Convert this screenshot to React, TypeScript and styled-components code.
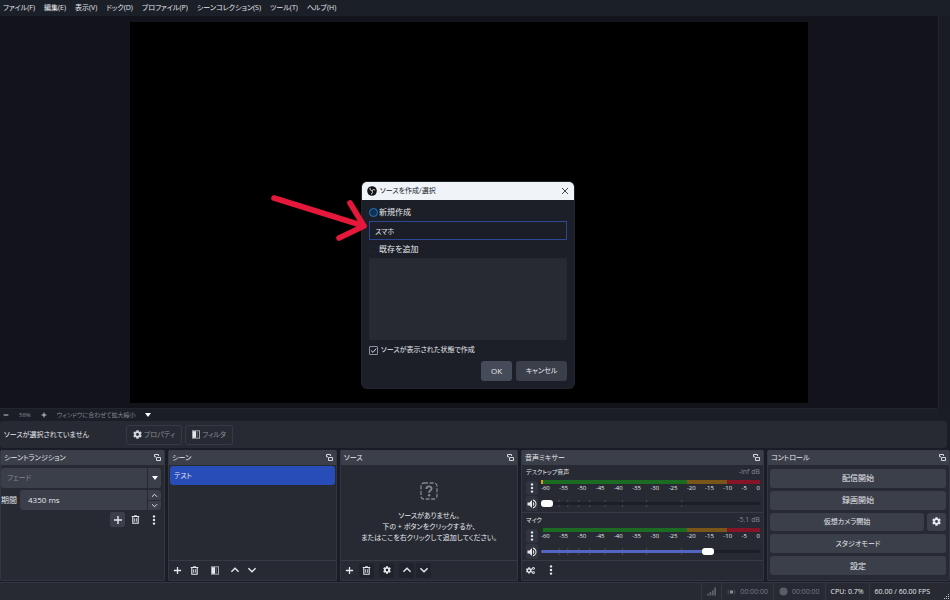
import React from "react";
import styled, { createGlobalStyle, css } from "styled-components";
import { FaCog, FaCogs } from "react-icons/fa";
import { MdVolumeUp } from "react-icons/md";

const GlobalStyle = createGlobalStyle`
  *, *::before, *::after { box-sizing: border-box; }
  html, body { margin: 0; background: #1a1d26; }
  body, button, input, select {
    font-family: "Open Sans", "Noto Sans CJK JP", sans-serif;
    font-size: 7px;
    line-height: 12px;
    font-feature-settings: "palt";
    color: #e6e8ec;
  }
  button, input, select { margin: 0; padding: 0; border: 0; background: none; outline: none; }
  svg { display: block; flex: none; }
`;

const Window = styled.div`
  position: relative;
  display: flex;
  flex-direction: column;
  height: 100vh;
  overflow: hidden;
`;

const MenuBar = styled.nav`
  display: flex;
  gap: 9px;
  height: 16px;
  padding: 0 3px;
  background: #1b1f28;
`;

const MenuItem = styled.button`
  white-space: nowrap;
`;

const Preview = styled.main`
  flex: 1;
  min-height: 0;
  display: flex;
  background: #13141b;
`;

const Stage = styled.div`
  flex: 1;
  display: flex;
  align-items: center;
  justify-content: center;
`;

const Canvas = styled.div`
  height: calc(100% - 11px);
  aspect-ratio: 16 / 9;
  background: #000;
`;

const ScrollTrack = styled.div`
  width: 12px;
  background: #191c24;
  border-left: 1px solid #22252e;
`;

const ZoomBar = styled.div`
  display: flex;
  align-items: center;
  gap: 10px;
  height: 12px;
  margin-right: 12px;
  padding: 0 3px;
  background: #1b1e26;
  border-top: 1px solid #22252e;
  color: #a6a8ae;
`;

const ZoomText = styled.span`
  font-size: 6px;
  color: #858890;
  white-space: nowrap;
`;

const BareButton = styled.button`
  display: flex;
  align-items: center;
  justify-content: center;
`;

const SourceBar = styled.section`
  display: flex;
  align-items: center;
  height: 27px;
  margin: 1px 3px 2px 0;
  padding: 0 4px;
  background: #272a33;
  border-radius: 3px;
`;

const SourceStatus = styled.span`
  width: 122px;
  white-space: nowrap;
`;

const OutlineButton = styled.button`
  display: flex;
  align-items: center;
  justify-content: center;
  gap: 2px;
  height: 20px;
  margin-right: 3px;
  padding: 0 6px;
  border: 1px solid #363a44;
  border-radius: 3px;
  color: #8b8e96;
  svg { color: #d5d7db; }
`;

const Docks = styled.div`
  display: grid;
  grid-template-columns:
    minmax(0, 165fr) minmax(0, 169fr) minmax(0, 178fr)
    minmax(0, 243fr) minmax(0, 183fr);
  gap: 3px;
  height: 131px;
`;

const Dock = styled.section`
  display: flex;
  flex-direction: column;
  background: #272a33;
  border: 1px solid #343741;
  border-top: 0;
  border-radius: 2px;
`;

const DockHeader = styled.header`
  display: flex;
  align-items: center;
  justify-content: space-between;
  height: 15px;
  padding: 0 3px;
  background: #3b3f4a;
`;

const DockTitle = styled.h2`
  margin: 0;
  font-size: 7px;
  font-weight: 400;
`;

const DockBody = styled.div<{ $pad?: string; $gap?: number }>`
  flex: 1;
  min-height: 0;
  display: flex;
  flex-direction: column;
  gap: ${(p) => p.$gap ?? 0}px;
  padding: ${(p) => p.$pad ?? "0"};
`;

const Field = styled.div`
  display: flex;
  height: 20px;
  flex: 1;
  background: #3b3f4a;
  border-radius: 3px;
  overflow: hidden;
`;

const FieldRow = styled.div`
  display: flex;
  align-items: center;
  gap: 3px;
`;

const FieldLabel = styled.label`
  font-size: 8px;
`;

const SelectWrap = styled(Field)`
  flex: none;
  width: 100%;
`;

const Select = styled.select`
  flex: 1;
  appearance: none;
  padding-left: 6px;
  color: #858890;
`;

const SelectArrow = styled.span`
  display: flex;
  align-items: center;
  justify-content: center;
  width: 14px;
  border-left: 1px solid #272a33;
  pointer-events: none;
`;

const SpinInput = styled.input`
  flex: 1;
  min-width: 0;
  padding-left: 8px;
  font-size: 8px;
`;

const SpinButtons = styled.div`
  display: grid;
  grid-template-rows: 1fr 1fr;
  width: 14px;
  border-left: 1px solid #272a33;
  button + button { border-top: 1px solid #272a33; }
`;

const ToolButton = styled.button<{ $tone?: "raised" | "sunken" }>`
  display: flex;
  align-items: center;
  justify-content: center;
  width: 15px;
  height: 15px;
  border-radius: 2px;
  ${(p) => p.$tone === "raised" && css`background: #3b3f4a;`}
  ${(p) => p.$tone === "sunken" && css`background: #20232b;`}
`;

const TransitionTools = styled.div`
  display: flex;
  justify-content: flex-end;
  gap: 3px;
`;

const DockTools = styled.footer`
  display: flex;
  align-items: center;
  gap: 5px;
  height: 20px;
  padding: 0 1px 1px;
  border-top: 1px solid #363a44;
`;

const ToolGroup = styled.div`
  display: flex;
  gap: 2px;
`;

const SceneList = styled.ul`
  flex: 1;
  margin: 0;
  padding: 1px;
  list-style: none;
`;

const SceneItem = styled.button`
  display: block;
  width: 100%;
  height: 19px;
  padding: 0 4px;
  text-align: left;
  background: #284cb8;
  border-radius: 3px;
`;

const EmptyState = styled.div`
  flex: 1;
  display: flex;
  flex-direction: column;
  align-items: center;
  justify-content: center;
  gap: 10px;
  text-align: center;
`;

const EmptyText = styled.p`
  margin: 0;
  line-height: 11px;
  white-space: nowrap;
`;

const Channel = styled.div`
  display: flex;
  flex-direction: column;
  height: 47px;
  padding: 1px 3px 0 4px;
  & + & { border-top: 1px solid #363a44; }
`;

const ChannelHead = styled.div`
  display: flex;
  justify-content: space-between;
  height: 14px;
`;

const ChannelName = styled.span`
  font-size: 6px;
`;

const Level = styled.span`
  color: #858890;
`;

const ChannelGrid = styled.div`
  display: grid;
  grid-template-columns: 12px minmax(0, 1fr);
  grid-template-rows: 15px 16px;
  column-gap: 3px;
`;

const ChannelButton = styled.button`
  display: flex;
  align-items: center;
  justify-content: center;
  margin-top: 1px;
  background: #31353f;
  border-radius: 2px;
`;

const Meter = styled.div`
  display: flex;
  height: 4px;
`;

const MeterZone = styled.div<{ $share: number; $color: string }>`
  flex: ${(p) => p.$share};
  background: ${(p) => p.$color};
`;

const Scale = styled.div`
  display: flex;
  justify-content: space-between;
  font-size: 6px;
  line-height: 8px;
`;

const SliderWrap = styled.div`
  position: relative;
  display: flex;
  align-items: center;
`;

const SliderTicks = styled.svg`
  position: absolute;
  inset: 0;
  width: 100%;
  height: 100%;
`;

const Slider = styled.input`
  position: relative;
  width: 100%;
  height: 8px;
  appearance: none;
  &::-webkit-slider-runnable-track {
    height: 3px;
    border-radius: 2px;
    background: linear-gradient(to right, #5366c4 var(--fill), #1c1f27 var(--fill));
  }
  &::-webkit-slider-thumb {
    appearance: none;
    width: 12px;
    height: 7px;
    margin-top: -2px;
    border-radius: 3px;
    background: #fff;
  }
`;

const ControlButton = styled.button<{ $size?: number }>`
  flex: 1;
  min-height: 0;
  background: #3b3f4a;
  border-radius: 3px;
  font-size: ${(p) => p.$size ?? 8}px;
`;

const ControlSplit = styled.div`
  flex: 1;
  min-height: 0;
  display: grid;
  grid-template-columns: minmax(0, 1fr) 19px;
  gap: 3px;
`;

const SquareButton = styled(ControlButton)`
  display: flex;
  align-items: center;
  justify-content: center;
`;

const StatusBar = styled.footer`
  display: flex;
  justify-content: flex-end;
  height: 18px;
  margin-top: 1px;
  background: #272a33;
  border-top: 1px solid #343741;
`;

const StatusCell = styled.div<{ $dim?: boolean }>`
  display: flex;
  align-items: center;
  gap: 4px;
  padding: 0 5px;
  border-left: 1px solid #343741;
  white-space: nowrap;
  color: ${(p) => (p.$dim ? "#777a83" : "#e6e8ec")};
`;

const Grip = styled.div`
  display: flex;
  align-items: flex-end;
  justify-content: flex-end;
  width: 15px;
  color: #c4c6cb;
`;

const Dialog = styled.div`
  position: absolute;
  top: 182px;
  left: 362px;
  width: 212px;
  background: #1c1f27;
  border-radius: 5px;
  box-shadow: 0 0 0 1px #22252d;
  overflow: hidden;
`;

const DialogHeader = styled.header`
  display: flex;
  align-items: center;
  gap: 3px;
  height: 18px;
  padding: 0 5px;
  background: #f0f4f8;
  color: #20232a;
`;

const DialogTitle = styled.h1`
  flex: 1;
  margin: 0;
  font-size: 7px;
  font-weight: 400;
`;

const DialogForm = styled.form`
  display: flex;
  flex-direction: column;
  padding: 3px 7px 7px;
`;

const Choice = styled.label`
  display: flex;
  align-items: center;
  gap: 1px;
  height: 18px;
  font-size: 8px;
`;

const CheckRow = styled.label`
  display: flex;
  align-items: center;
  gap: 3px;
  height: 20px;
`;

const Radio = styled.input`
  appearance: none;
  width: 9px;
  height: 9px;
  border: 1px solid #22262f;
  border-radius: 50%;
  &:checked { border-color: #1f78c8; background: #12304f; }
`;

const NameInput = styled.input`
  height: 19px;
  padding: 0 5px;
  background: #1b1e26;
  border: 1px solid #2d4794;
`;

const ExistingList = styled.div`
  height: 82px;
  background: #272a33;
  border-radius: 2px;
`;

const CheckWrap = styled.span`
  position: relative;
  display: flex;
`;

const Check = styled.input`
  appearance: none;
  width: 9px;
  height: 9px;
  border: 1px solid #8d9098;
  border-radius: 1px;
`;

const CheckMark = styled.svg`
  position: absolute;
  inset: 0;
  pointer-events: none;
`;

const DialogActions = styled.div`
  display: flex;
  justify-content: flex-end;
  gap: 4px;
  margin-top: 1px;
`;

const DialogButton = styled.button<{ $primary?: boolean }>`
  min-width: ${(p) => (p.$primary ? 31 : 51)}px;
  height: 20px;
  border-radius: 3px;
  font-size: ${(p) => (p.$primary ? 8 : 7)}px;
  background: ${(p) => (p.$primary ? "#464b59" : "#3b3f4a")};
`;

const Arrow = styled.svg`
  position: absolute;
  top: 190px;
  left: 266px;
`;

type StrokeIconProps = { d: string; size?: number; weight?: number };
const StrokeIcon = ({ d, size = 10, weight = 1.4 }: StrokeIconProps) => (
  <svg width={size} height={size} viewBox="0 0 10 10" fill="none" stroke="currentColor" strokeWidth={weight}>
    <path d={d} />
  </svg>
);

const Plus = ({ size = 10 }: { size?: number }) => <StrokeIcon size={size} d="M5 1v8M1 5h8" />;
const ChevronUp = ({ size = 10 }: { size?: number }) => <StrokeIcon size={size} d="M1.4 6.8 5 3.2l3.6 3.6" />;
const ChevronDown = ({ size = 10 }: { size?: number }) => <StrokeIcon size={size} d="M1.4 3.2 5 6.8l3.6-3.6" />;

const Trash = () => (
  <svg width="9" height="9" viewBox="0 0 10 10" fill="none" stroke="currentColor">
    <path d="M.8 1.7h8.4M3.5 1h3M2 2v7.2h6V2" strokeWidth="1.2" />
    <path d="M4 3.6v4M6 3.6v4" strokeWidth=".9" />
  </svg>
);

const Dots = () => (
  <svg width="4" height="10" viewBox="0 0 4 10" fill="currentColor">
    <circle cx="2" cy="1.4" r="1.2" />
    <circle cx="2" cy="5" r="1.2" />
    <circle cx="2" cy="8.6" r="1.2" />
  </svg>
);

const FilterIcon = () => (
  <svg width="8" height="9" viewBox="0 0 8 9" fill="none">
    <rect x=".5" y=".8" width="7" height="7.4" stroke="#a6a8ae" />
    <path d="M1 1.2h3v6.6H1z" fill="#e6e8ec" />
    <path d="M5.2 1.4v6.2" stroke="#6b6e77" />
  </svg>
);

const PopOut = () => (
  <svg width="7" height="7" viewBox="0 0 7 7" fill="none" stroke="#d5d7db">
    <path d="M2 2.800H.5V.5h4V2" />
    <path d="M2.500 3.500h4v3h-4z" />
  </svg>
);

const Triangle = () => (
  <svg width="6" height="4" viewBox="0 0 6 4" fill="#fff">
    <path d="M0 0h6L3 4z" />
  </svg>
);

const Logo = () => (
  <svg width="10" height="10" viewBox="0 0 20 20">
    <circle cx="10" cy="10" r="9.6" fill="#111317" />
    <g fill="none" stroke="#d8dade" strokeWidth="2" strokeLinecap="round">
      <path d="M6 4.5c-.6 2.6.8 4.8 3.6 5" />
      <path d="M15.8 8c-2-1.8-4.800-1.200-6 1.400" />
      <path d="M8.800 16c2.600-.8 3.400-3.400 1.600-5.800" />
    </g>
  </svg>
);

const Question = () => (
  <svg width="18" height="18" viewBox="0 0 18 18" fill="none" stroke="#82858d">
    <rect x="1" y="1" width="16" height="16" rx="3" strokeWidth="1.3" strokeDasharray="4 1.6" />
    <path d="M6.4 7c0-3.400 5.200-3.400 5.200-.4 0 1.900-2.500 2-2.500 4.200" strokeWidth="1.9" />
    <circle cx="9.1" cy="13.3" r="1.2" fill="#82858d" stroke="none" />
  </svg>
);

const Signal = () => (
  <svg width="9" height="9" viewBox="0 0 10 9" fill="#5c5f68">
    <path d="M0 7h2v2H0zM2.700 5h2v4h-2zM5.400 3h2v6h-2zM8 0h2v9H8z" />
  </svg>
);

const Broadcast = () => (
  <svg width="9" height="8" viewBox="0 0 9 8" fill="none" stroke="#4a4d56">
    <circle cx="4.5" cy="4" r="1.8" fill="#8b8e96" stroke="none" />
    <path d="M2 1.600a3.400 3.400 0 0 0 0 4.800M7 1.600a3.400 3.400 0 0 1 0 4.800" />
  </svg>
);

const RecordDot = () => (
  <svg width="9" height="9" viewBox="0 0 9 9">
    <circle cx="4.5" cy="4.5" r="4" fill="#5a5d66" />
  </svg>
);

const menus = [
  "ファイル(F)", "編集(E)", "表示(V)", "ドック(D)", "プロファイル(P)",
  "シーンコレクション(S)", "ツール(T)", "ヘルプ(H)",
];
const scale = [-60, -55, -50, -45, -40, -35, -30, -25, -20, -15, -10, -5, 0];
const sliderTicks = [8, 12, 17, 22, 29, 37, 48, 64];

const Header = ({ title }: { title: string }) => (
  <DockHeader>
    <DockTitle>{title}</DockTitle>
    <BareButton aria-label={`${title}を切り離す`}><PopOut /></BareButton>
  </DockHeader>
);

type ChannelProps = { name: string; level: string; value: number; peak?: boolean };
const MixerChannel = ({ name, level, value, peak }: ChannelProps) => {
  const [volume, setVolume] = React.useState(value);
  return (
    <Channel>
      <ChannelHead>
        <ChannelName>{name}</ChannelName>
        <Level>{level}</Level>
      </ChannelHead>
      <ChannelGrid>
        <ChannelButton aria-label={`${name}のメニュー`}><Dots /></ChannelButton>
        <div>
          <Meter>
            <MeterZone $share={2} $color={peak ? "#d9a01e" : "#0f3d14"} />
            <MeterZone $share={144} $color="#1b6b22" />
            <MeterZone $share={40} $color="#7a5518" />
            <MeterZone $share={33} $color="#851428" />
          </Meter>
          <Scale>
            {scale.map((n) => <span key={n}>{n}</span>)}
          </Scale>
        </div>
        <ChannelButton aria-label={`${name}をミュート`}><MdVolumeUp size={12} /></ChannelButton>
        <SliderWrap>
          <SliderTicks aria-hidden="true">
            {sliderTicks.map((x) => (
              <rect key={x} x={`${x}%`} y="5" width="1" height="7" fill="#474b55" />
            ))}
          </SliderTicks>
          <Slider
            type="range"
            min={0}
            max={100}
            value={volume}
            aria-label={`${name}の音量`}
            onChange={(e) => setVolume(Number(e.target.value))}
            style={{ "--fill": `${volume}%` } as React.CSSProperties}
          />
        </SliderWrap>
      </ChannelGrid>
    </Channel>
  );
};

export default function App() {
  return (
    <>
      <GlobalStyle />
      <Window>
        <MenuBar>
          {menus.map((m) => <MenuItem key={m}>{m}</MenuItem>)}
        </MenuBar>

        <Preview>
          <Stage><Canvas /></Stage>
          <ScrollTrack />
        </Preview>

        <ZoomBar>
          <BareButton aria-label="縮小"><StrokeIcon size={6} d="M1 5h8" /></BareButton>
          <ZoomText>58%</ZoomText>
          <BareButton aria-label="拡大"><Plus size={6} /></BareButton>
          <ZoomText>ウィンドウに合わせて拡大縮小</ZoomText>
          <BareButton aria-label="表示倍率"><Triangle /></BareButton>
        </ZoomBar>

        <SourceBar>
          <SourceStatus>ソースが選択されていません</SourceStatus>
          <OutlineButton><FaCog size={9} />プロパティ</OutlineButton>
          <OutlineButton><FilterIcon />フィルタ</OutlineButton>
        </SourceBar>

        <Docks>
          <Dock>
            <Header title="シーントランジション" />
            <DockBody $pad="3px 3px 0 0" $gap={2}>
              <SelectWrap>
                <Select aria-label="トランジション"><option>フェード</option></Select>
                <SelectArrow><Triangle /></SelectArrow>
              </SelectWrap>
              <FieldRow>
                <FieldLabel htmlFor="duration">期間</FieldLabel>
                <Field>
                  <SpinInput id="duration" defaultValue="4350 ms" />
                  <SpinButtons>
                    <BareButton aria-label="増やす"><ChevronUp size={7} /></BareButton>
                    <BareButton aria-label="減らす"><ChevronDown size={7} /></BareButton>
                  </SpinButtons>
                </Field>
              </FieldRow>
              <TransitionTools>
                <ToolButton $tone="raised" aria-label="追加"><Plus /></ToolButton>
                <ToolButton aria-label="削除"><Trash /></ToolButton>
                <ToolButton aria-label="メニュー"><Dots /></ToolButton>
              </TransitionTools>
            </DockBody>
          </Dock>

          <Dock>
            <Header title="シーン" />
            <SceneList>
              <li><SceneItem>テスト</SceneItem></li>
            </SceneList>
            <DockTools>
              <ToolGroup>
                <ToolButton aria-label="追加"><Plus size={9} /></ToolButton>
                <ToolButton aria-label="削除"><Trash /></ToolButton>
              </ToolGroup>
              <ToolButton aria-label="フィルタ"><FilterIcon /></ToolButton>
              <ToolGroup>
                <ToolButton aria-label="上へ"><ChevronUp /></ToolButton>
                <ToolButton aria-label="下へ"><ChevronDown /></ToolButton>
              </ToolGroup>
            </DockTools>
          </Dock>

          <Dock>
            <Header title="ソース" />
            <EmptyState>
              <Question />
              <EmptyText>
                ソースがありません。<br />
                下の + ボタンをクリックするか、<br />
                またはここを右クリックして追加してください。
              </EmptyText>
            </EmptyState>
            <DockTools>
              <ToolGroup>
                <ToolButton aria-label="追加"><Plus size={9} /></ToolButton>
                <ToolButton $tone="sunken" aria-label="削除"><Trash /></ToolButton>
              </ToolGroup>
              <ToolButton $tone="sunken" aria-label="プロパティ"><FaCog size={8} /></ToolButton>
              <ToolGroup>
                <ToolButton $tone="sunken" aria-label="上へ"><ChevronUp /></ToolButton>
                <ToolButton $tone="sunken" aria-label="下へ"><ChevronDown /></ToolButton>
              </ToolGroup>
            </DockTools>
          </Dock>

          <Dock>
            <Header title="音声ミキサー" />
            <DockBody>
              <MixerChannel name="デスクトップ音声" level="-inf dB" value={0} peak />
              <MixerChannel name="マイク" level="-5.1 dB" value={78} />
            </DockBody>
            <DockTools>
              <ToolButton aria-label="詳細設定"><FaCogs size={9} /></ToolButton>
              <ToolButton aria-label="メニュー"><Dots /></ToolButton>
            </DockTools>
          </Dock>

          <Dock>
            <Header title="コントロール" />
            <DockBody $pad="4px 3px 5px 2px" $gap={3}>
              <ControlButton>配信開始</ControlButton>
              <ControlButton>録画開始</ControlButton>
              <ControlSplit>
                <ControlButton $size={7}>仮想カメラ開始</ControlButton>
                <SquareButton aria-label="仮想カメラの設定"><FaCog size={9} /></SquareButton>
              </ControlSplit>
              <ControlButton $size={7}>スタジオモード</ControlButton>
              <ControlButton>設定</ControlButton>
            </DockBody>
          </Dock>
        </Docks>

        <StatusBar>
          <StatusCell><Signal /></StatusCell>
          <StatusCell $dim><Broadcast />00:00:00</StatusCell>
          <StatusCell $dim><RecordDot />00:00:00</StatusCell>
          <StatusCell>CPU: 0.7%</StatusCell>
          <StatusCell>60.00 / 60.00 FPS</StatusCell>
          <Grip>
            <svg width="7" height="7" viewBox="0 0 7 7" fill="currentColor">
              <path d="M5 1h1v1H5zM3 3h1v1H3zM5 3h1v1H5zM1 5h1v1H1zM3 5h1v1H3zM5 5h1v1H5z" />
            </svg>
          </Grip>
        </StatusBar>

        <Dialog role="dialog" aria-labelledby="dialog-title">
          <DialogHeader>
            <Logo />
            <DialogTitle id="dialog-title">ソースを作成/選択</DialogTitle>
            <BareButton aria-label="閉じる">
              <svg width="8" height="8" viewBox="0 0 8 8" stroke="#30333a" strokeWidth=".9">
                <path d="M1 1l6 6M7 1 1 7" />
              </svg>
            </BareButton>
          </DialogHeader>
          <DialogForm onSubmit={(e) => e.preventDefault()}>
            <Choice><Radio type="radio" name="mode" defaultChecked />新規作成</Choice>
            <NameInput aria-label="ソース名" defaultValue="スマホ" />
            <Choice><Radio type="radio" name="mode" />既存を追加</Choice>
            <ExistingList />
            <CheckRow>
              <CheckWrap>
                <Check type="checkbox" defaultChecked />
                <CheckMark width="9" height="9" viewBox="0 0 9 9" fill="none" stroke="#d5d7db">
                  <path d="M2 4.500 4 6.400 7.200 2.600" />
                </CheckMark>
              </CheckWrap>
              ソースが表示された状態で作成
            </CheckRow>
            <DialogActions>
              <DialogButton $primary type="submit">OK</DialogButton>
              <DialogButton type="button">キャンセル</DialogButton>
            </DialogActions>
          </DialogForm>
        </Dialog>

        <Arrow width="104" height="56" viewBox="0 0 104 56" fill="none" stroke="#e5173a" strokeWidth="5.600" strokeLinecap="round" strokeLinejoin="round" aria-hidden="true">
          <path d="M8 8 98 36M84 13l14 23-25 12" />
        </Arrow>
      </Window>
    </>
  );
}
